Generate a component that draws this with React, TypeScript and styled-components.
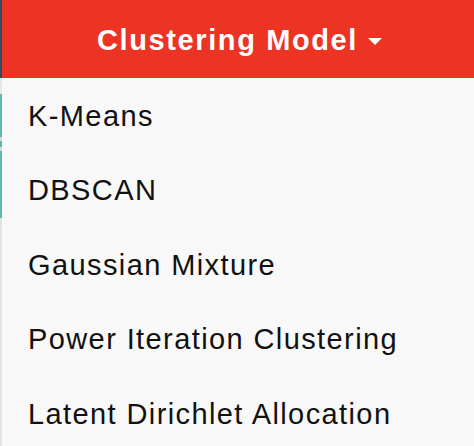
import React from "react";
import styled, { createGlobalStyle } from "styled-components";

const Global = createGlobalStyle`
  html, body { margin: 0; padding: 0; }
  body { width: 474px; height: 446px; overflow: hidden; background: #f8f8f8; font-family: "Liberation Sans", Arial, sans-serif; }
`;

const Page = styled.div`
  display: flex;
  width: 474px;
  height: 446px;
  overflow: hidden;
`;

const Edge = styled.div`
  width: 2px;
  display: flex;
  flex-direction: column;
  flex-shrink: 0;
`;

const EdgeSeg = styled.div<{ $h: number; $c: string }>`
  height: ${(p) => p.$h}px;
  flex-shrink: 0;
  background: ${(p) => p.$c};
`;

const Panel = styled.div`
  flex: 1;
  display: flex;
  flex-direction: column;
  overflow: hidden;
`;

const Header = styled.div`
  height: 78px;
  flex-shrink: 0;
  box-sizing: border-box;
  background: #ec3324;
  display: flex;
  align-items: center;
  justify-content: center;
  gap: 10px;
  color: #fff;
  font-weight: bold;
  font-size: 29px;
  letter-spacing: 1.6px;
  padding: 3px 0 0 3px;
`;

const Caret = styled.span`
  width: 0;
  height: 0;
  border-left: 7px solid transparent;
  border-right: 7px solid transparent;
  border-top: 7px solid #fff;
  margin-top: 2px;
`;

const Menu = styled.ul`
  list-style: none;
  margin: 0;
  padding: 1px 0 0;
  flex-shrink: 0;
  background: #f8f8f8;
`;

const Item = styled.li`
  height: 74.5px;
  display: flex;
  align-items: center;
  padding-left: 26px;
  font-size: 29px;
  letter-spacing: 1.4px;
  color: #111;
`;

const items = [
  "K-Means",
  "DBSCAN",
  "Gaussian Mixture",
  "Power Iteration Clustering",
  "Latent Dirichlet Allocation",
];

export default function App() {
  return (
    <>
      <Global />
      <Page>
        <Edge>
          <EdgeSeg $h={78} $c="#2f4b5f" />
          <EdgeSeg $h={16} $c="#e6e6e6" />
          <EdgeSeg $h={43} $c="#5bb8b6" />
          <EdgeSeg $h={4} $c="#d8d8d8" />
          <EdgeSeg $h={6} $c="#5bb8b6" />
          <EdgeSeg $h={4} $c="#d8d8d8" />
          <EdgeSeg $h={67} $c="#5bb8b6" />
          <EdgeSeg $h={228} $c="#e2e2e2" />
        </Edge>
        <Panel>
          <Header>
            <span>Clustering Model</span>
            <Caret />
          </Header>
          <Menu>
            {items.map((t) => (
              <Item key={t}>{t}</Item>
            ))}
          </Menu>
        </Panel>
      </Page>
    </>
  );
}
